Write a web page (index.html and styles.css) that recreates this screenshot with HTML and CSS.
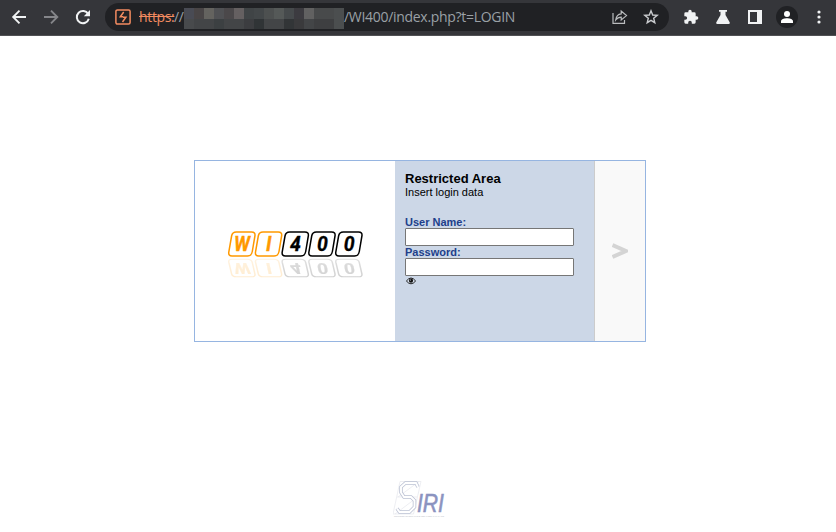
FILE: index.html
```html
<!DOCTYPE html>
<html lang="en">
<head>
<meta charset="utf-8">
<title>WI400</title>
<link rel="stylesheet" href="styles.css">
</head>
<body>
<header class="toolbar">
  <svg class="nav back" width="16" height="16" viewBox="0 0 16 16"><path d="M15 8H2M8.500 1.700L2.200 8L8.500 14.300" fill="none" stroke="#f1f3f4" stroke-width="1.9"/></svg>
  <svg class="nav forward" width="16" height="16" viewBox="0 0 16 16"><path d="M1 8H14M8 1.700L14.300 8L8 14.300" fill="none" stroke="#85868a" stroke-width="1.9"/></svg>
  <svg class="nav reload" width="16" height="16" viewBox="0 0 16 16"><path d="M13.200 5A6.100 6.100 0 1 0 13.800 9.800" fill="none" stroke="#f1f3f4" stroke-width="2"/><path d="M15 1V7.200H8.800Z" fill="#f1f3f4"/></svg>
  <div class="address">
    <svg class="site" width="16" height="16" viewBox="0 0 16 16"><rect x=".9" y=".9" width="14.2" height="14.2" rx="1.5" fill="none" stroke="#f28b60" stroke-width="1.5"/><path d="M8.700 3L5.300 7.800H8.200M7.500 13L10.900 8.200H8" fill="none" stroke="#f28b60" stroke-width="1.500"/></svg>
    <span class="scheme">https:</span><span class="slashes">//</span>
    <svg class="redacted" width="160" height="21" shape-rendering="crispEdges">
      <rect width="160" height="21" fill="#434547"/>
      <rect width="10" height="11" fill="#494b54"/><rect x="10" width="10" height="11" fill="#494546"/><rect x="20" width="10" height="11" fill="#64635f"/><rect x="30" width="10" height="11" fill="#505154"/><rect x="40" width="10" height="11" fill="#4b484a"/><rect x="50" width="10" height="11" fill="#656061"/><rect x="60" width="10" height="11" fill="#404446"/><rect x="70" width="10" height="11" fill="#434749"/><rect x="80" width="10" height="11" fill="#4d5050"/><rect x="90" width="10" height="11" fill="#555958"/><rect x="100" width="10" height="11" fill="#464a4c"/><rect x="110" width="10" height="11" fill="#3c3b40"/><rect x="120" width="10" height="11" fill="#616161"/><rect x="130" width="20" height="11" fill="#484a4b"/><rect x="150" width="10" height="21" fill="#4b4e4f"/>
      <rect y="11" width="10" height="10" fill="#484a4c"/><rect x="30" y="11" width="10" height="10" fill="#3c4042"/><rect x="60" y="11" width="10" height="10" fill="#3c3d40"/><rect x="70" y="11" width="10" height="10" fill="#303436"/><rect x="100" y="11" width="10" height="10" fill="#323537"/><rect x="110" y="11" width="10" height="10" fill="#3a3a3c"/><rect x="130" y="11" width="20" height="10" fill="#3e3f41"/>
    </svg>
    <span class="path">/WI400/index.php?t=LOGIN</span>
    <svg class="share" width="16" height="16" viewBox="0 0 16 16" fill="none" stroke="#babcbe" stroke-width="1.2"><path d="M1 4V14.300H12.500V11"/><path d="M3.700 11C4.200 7.400 6 5.200 9.200 4.900V2L14.500 6.600L9.200 11V8.200C6.800 8.200 5.200 9 3.700 11Z"/></svg>
    <svg class="star" width="16" height="16" viewBox="0 0 16 16"><path d="M8 1.800L9.700 6L14.200 6.300L10.700 9.200L11.800 13.700L8 11.300L4.200 13.700L5.300 9.200L1.800 6.300L6.300 6Z" fill="none" stroke="#c9cbce" stroke-width="1.4"/></svg>
  </div>
  <svg class="puzzle" width="16" height="16" viewBox="0 0 24 24"><path d="M20.500 11H19V7a2 2 0 0 0-2-2h-4V3.500a2.500 2.500 0 0 0-5 0V5H4a2 2 0 0 0-2 2v3.800h1.500a2.700 2.700 0 0 1 0 5.400H2V20a2 2 0 0 0 2 2h3.800v-1.500a2.700 2.700 0 0 1 5.400 0V22H17a2 2 0 0 0 2-2v-4h1.500a2.500 2.500 0 0 0 0-5z" fill="#f1f3f4"/></svg>
  <svg class="flask" width="16" height="16" viewBox="0 0 16 16"><path d="M4 1H12V2.700H10.500V6L14.800 13.400Q15 15 13.600 15H2.400Q1 15 1.200 13.400L5.500 6V2.700H4Z" fill="#f1f3f4"/></svg>
  <svg class="side" width="14" height="14" viewBox="0 0 14 14"><path d="M0 0H14V14H0ZM2 2V12H9V2Z" fill="#f1f3f4" fill-rule="evenodd"/></svg>
  <svg class="profile" width="22" height="22" viewBox="0 0 22 22"><circle cx="11" cy="11" r="11" fill="#202124"/><circle cx="11" cy="8" r="3" fill="#fff"/><path d="M5 17V15.300C5 13 8.500 12.200 11 12.200S17 13 17 15.300V17Z" fill="#fff"/></svg>
  <svg class="dots" width="4" height="14" viewBox="0 0 4 14" fill="#f1f3f4"><circle cx="2" cy="2" r="1.6"/><circle cx="2" cy="7" r="1.6"/><circle cx="2" cy="12" r="1.6"/></svg>
</header>
<main class="page">
  <form class="login">
    <div class="brand">
      <svg width="140" height="52" viewBox="0 0 140 52">
        <defs>
          <path id="tile" d="M8.300 1H23.500Q27.600 1 26.900 5L24.300 20.500Q23.500 25 19.300 25H4Q.2 25 .8 21L3.600 5Q4.300 1 8.300 1Z" fill="none" stroke-width="1.500"/>
          <g id="mark">
            <g class="orange"><use href="#tile" x="2"/><use href="#tile" x="28.700"/><text x="8" y="20.300" textLength="16" lengthAdjust="spacingAndGlyphs">W</text><text x="40" y="20.300">I</text></g>
            <g class="black"><use href="#tile" x="55.400"/><use href="#tile" x="82.100"/><use href="#tile" x="109"/><text x="64" y="20.300">4</text><text x="91" y="20.300">0</text><text x="117.800" y="20.300">0</text></g>
          </g>
          <linearGradient id="fade" x1="0" y1="0" x2="0" y2="1"><stop offset="0" stop-color="#fff" stop-opacity=".12"/><stop offset="1" stop-color="#fff" stop-opacity=".2"/></linearGradient>
          <mask id="soft" maskUnits="userSpaceOnUse" x="0" y="27" width="140" height="25"><rect y="27" width="140" height="25" fill="url(#fade)"/></mask>
        </defs>
        <use href="#mark"/>
        <g mask="url(#soft)"><use href="#mark" transform="matrix(1 0 0 -.73 0 46.500)"/></g>
      </svg>
    </div>
    <div class="fields">
      <h1>Restricted Area</h1>
      <p>Insert login data</p>
      <label for="user">User Name:</label>
      <input id="user" type="text">
      <label for="pass">Password:</label>
      <input id="pass" type="password">
      <svg class="eye" width="10" height="8" viewBox="0 0 10 8"><path d="M.4 4Q5-2 9.600 4Q5 9.600 .4 4Z" fill="#fff" fill-opacity=".2" stroke="#111" stroke-width=".9"/><circle cx="5" cy="3.700" r="2.100" fill="#111"/><circle cx="4.400" cy="3" r=".6" fill="#ccd7e7"/></svg>
    </div>
    <div class="submit"><svg width="16" height="18" viewBox="0 0 16 18"><path d="M.5 3L14 9L.5 15" fill="none" stroke="#d4d4d4" stroke-width="4"/></svg></div>
  </form>
  <footer class="vendor">
    <svg width="56" height="42" viewBox="0 0 56 42">
      <path d="M7 2.500H28L20.500 35H0ZM5 18L26 2.500M2 35L22 20M4 18H24" fill="none" stroke="#e5e7ed" stroke-width=".7"/>
      <path class="outer" d="M25 8L23 4H12.500L8 8V13.500L11 18H18L21.500 21.500V28L16.500 33H6.500L4 29.500"/>
      <path class="inner" d="M25 8L23 4H12.500L8 8V13.500L11 18H18L21.500 21.500V28L16.500 33H6.500L4 29.500"/>
      <text class="iri" x="24" y="33" textLength="27" lengthAdjust="spacingAndGlyphs">IRI</text>
      <text class="tagline" x="1" y="37.500" textLength="50" lengthAdjust="spacingAndGlyphs">SOLUZIONI INFORMATICHE PER IL RETAIL ITALIANO</text>
    </svg>
  </footer>
</main>
</body>
</html>
```
FILE: styles.css
```css
* { box-sizing: border-box; }
body { margin: 0; background: #fff; font-family: "Liberation Sans", Arial, sans-serif; width: 836px; height: 532px; overflow: hidden; }
svg { display: block; flex: none; }
.toolbar { height: 36px; background: #35363a; border-bottom: 1px solid #505154; display: flex; align-items: center; padding: 0 14px 1px 11px; }
.forward { margin-left: 16px; }
.reload { margin-left: 16px; }
.address { width: 564px; height: 28px; margin-left: 14px; border-radius: 14px; background: #202124; display: flex; align-items: center; padding-left: 10px; font: 14px/20px "Open Sans", sans-serif; color: #9aa0a6; white-space: nowrap; }
.scheme { margin-left: 8px; width: 35px; color: #f28b60; text-decoration: line-through; letter-spacing: -.35px; }
.slashes { width: 10px; letter-spacing: -.3px; }
.redacted { margin-top: 2px; }
.path { width: 268px; letter-spacing: -.3px; }
.star { margin-left: 15px; }
.puzzle { margin-left: 14px; }
.flask { margin-left: 16px; }
.side { margin-left: 17px; }
.profile { margin-left: 14px; }
.dots { margin-left: 19px; }
.page { height: 496px; display: flex; flex-direction: column; align-items: center; padding-top: 124px; }
.login { width: 452px; height: 182px; flex: none; margin-left: 4px; border: 1px solid #96b5e1; display: grid; grid-template-columns: 200px 199px 51px; }
.brand { padding: 70px 0 0 31px; }
.brand text { font: italic bold 19.5px Roboto, sans-serif; }
.orange { stroke: #f90; }
.orange text { fill: #f90; stroke-width: .3px; }
.black { stroke: #000; }
.black text { fill: #000; stroke-width: .3px; }
.fields { background: #ccd7e7; padding: 10px; font-size: 11px; }
h1 { margin: 0; font-size: 13px; line-height: 15px; }
p { margin: 0 0 18px; font-size: 11px; line-height: 12px; }
label { display: block; font-weight: bold; line-height: 12px; color: #213f8b; }
input { display: block; width: 169px; height: 18px; margin: 0; border: 1px solid #767676; border-radius: 1px; background: #fff; padding: 1px 2px; }
.eye { margin: 1px 0 0 1px; }
.submit { background: #f9f9f9; border-left: 1px solid #ccc; display: grid; place-items: center; }
.vendor { margin: 137px 0 0 6px; }
.outer { fill: none; stroke: #bcc2d4; stroke-width: 3.5px; }
.inner { fill: none; stroke: #fff; stroke-width: 1.9px; }
.iri { font: italic 25px "Liberation Sans", sans-serif; fill: #8b93bf; stroke: #8b93bf; stroke-width: .6px; }
.tagline { font: 2.5px "Liberation Sans", sans-serif; fill: #b9bcc6; }
```
